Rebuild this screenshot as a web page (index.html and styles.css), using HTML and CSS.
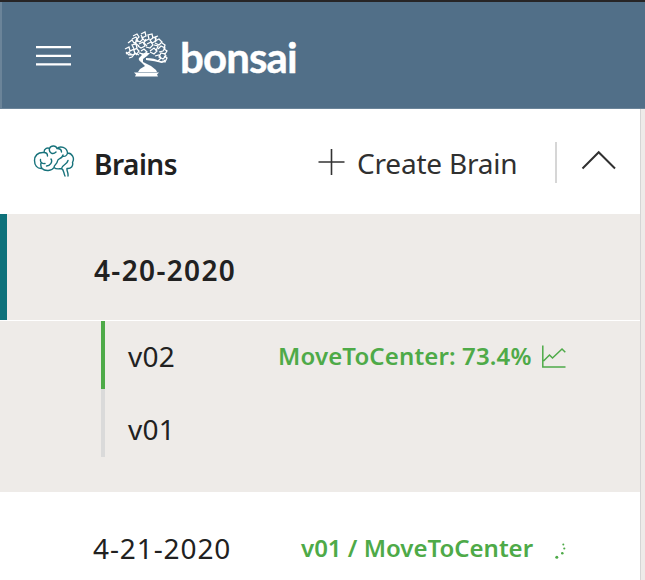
FILE: index.html
```html
<!DOCTYPE html>
<html lang="en">
<head>
<meta charset="utf-8">
<title>Bonsai</title>
<link rel="stylesheet" href="styles.css">
</head>
<body>
<header class="topbar">
  <svg class="menu" width="35" height="22" viewBox="0 0 35 22"><path d="M0 2.2h35M0 10.8h35M0 19.4h35"/></svg>
  <svg class="tree" width="46" height="46" viewBox="0 0 46 46">
    <g class="leaves">
      <path d="M1 18l4-2 1 4 4-2-2-4 4-1 1 4-3 2 1 4-4 1-2-3-3 2M4 12l4-3 2 3 4-2-2-4-4 2M9 5l4-2 2 3-3 3 4 2 3-3-2-4M17 3l4-2 1 4-4 2 3 3 4-2-1-4 4-1 1 4-3 2 2 3 4-2-1-4 3-1"/>
      <path d="M15 13l4-2 2 4-4 2-3-2M17 20l3-2 3 3-3 2-5-1M23 13l4-2 2 3-3 3-4-1M26 20l4-3 3 3-3 3-4-2M31 10l4-2 3 3-3 3-4-2M34 18l3-3 4 2-2 3-4 1M38 12l3 2-1 4 3 2-2 3-4-1-2 4 4 2 3-3-2-3M31 25l4-1 2 3-3 3 5 1 2-2M2 21l3 3 3-1M5 27l3-1 3-4 4 2M12 17l3 3-3 4"/>
      <path d="M28 6l4 1-1 4M22 8l-2 4 3 3M13 9l-2 3 4 3M30 14l4 1-2 5M40 25l3 2-2 4-3-1"/>
    </g>
    <path class="trunk" d="M15 21l4 2 3-1 4 0-3 3-4 3 0 3 8 4 5 4 1 2H14l2-3 5-3-4-4q-3-2-2-4l3-3zM22 27q9 0 13 3l4 1-1 1q-7-2-16-3z"/>
    <path class="pot" d="M10 41.5h25l-2 2 1 2H11l1-2z"/>
  </svg>
  <span class="wordmark">bonsai</span>
</header>
<div class="body">
  <main class="panel">
    <section class="heading">
      <svg class="brain" width="42" height="34" viewBox="0 0 42 34">
        <path d="M9 24.5C4 25 1.500 21 1.500 16.500S4.500 8 11 8.500C11 4 15 3.500 16.500 4.500C18 1 23 1.500 24 4.500C27 1.500 34 3 34.500 9C39 9 42 14 39.500 18.500C40.500 22 38 25 34 24.500C33.500 27 35.500 28 35 32M9 24.500C12 27.500 19 27 21 23.500C23 25.500 26 25 28.500 24.500C31 25.500 30.500 29 32 32M11 8.500C13 8.500 14.500 10 14.500 12M7.500 15.500C7 18.500 9.500 20 12 19.500M9 24.500C8 23 7.500 21 8 19M16.500 4.500C15.500 9 20 11 23 8M18 15C20 18 17 22 13.500 22M21 23.500C21 20 24 21 24.500 17C25 14 29 15.500 30 11M24 4.500C27 4.500 28.500 6 28.500 8M34.500 9C34 12 31.500 13 29.500 12M28.500 24.500C29 20.500 34 21 35 16.500"/>
      </svg>
      <h1 class="title">Brains</h1>
      <svg class="plus" width="27" height="27" viewBox="0 0 27 27"><path d="M.5 13h26M13.500 0v26"/></svg>
      <span class="create">Create Brain</span>
      <span class="divider"></span>
      <svg class="chevron" width="36" height="20" viewBox="0 0 36 20"><path d="M1.500 18.500L17.700 2.200 34 18.500"/></svg>
    </section>
    <section class="group"><span class="date strong">4-20-2020</span></section>
    <section class="versions">
      <div class="version active">
        <span class="label">v02</span>
        <span class="status score">MoveToCenter: 73.4%</span>
        <svg class="chart" width="24" height="24" viewBox="0 0 24 24"><path d="M.8.5v21.500h22.700M1.500 16l6-6 3 3L20 4l3.300 3.300"/></svg>
      </div>
      <div class="version"><span class="label">v01</span></div>
    </section>
    <section class="next">
      <span class="date">4-21-2020</span>
      <span class="status running">v01 / MoveToCenter</span>
      <svg class="spinner" width="12" height="16" viewBox="0 0 12 16"><circle cx="1.800" cy="14.200" r="1.500"/><circle cx="7.300" cy="10.300" r="1.300"/><circle cx="9.300" cy="5.500" r="1.100"/><circle cx="8.300" cy="1.400" r="1"/></svg>
    </section>
  </main>
</div>
</body>
</html>
```
FILE: styles.css
```css
* { box-sizing: border-box; }
body { margin: 0; width: 645px; height: 580px; overflow: hidden; background: #fff; color: #212121; font-family: "Noto Sans", "Open Sans", sans-serif; }
svg { display: block; flex: none; fill: none; }
span, h1 { white-space: nowrap; flex: none; }
.topbar { height: 109px; display: flex; align-items: flex-start; background: #516f88; border-top: 2px solid #272526; border-bottom: 1px solid #6b8499; box-shadow: inset 2px 0 #6b8499; padding-left: 36px; }
.menu { margin-top: 43px; stroke: #fff; stroke-width: 2.2; }
.tree { margin: 29px 0 0 53px; }
.leaves { stroke: #fff; stroke-width: 1.25; }
.trunk, .pot { fill: #fff; }
.wordmark { width: 130px; margin: 30px 0 0 10px; color: #fff; font: 700 42px/50px Lato, sans-serif; letter-spacing: -.9px; -webkit-text-stroke: .4px #fff; }
.body { height: 471px; background: #eeebe9; }
.panel { width: 641px; height: 471px; background: #fff; border-right: 1px solid #d5d5d5; }
.heading { height: 105px; display: flex; }
.brain { margin: 35px 0 0 33px; stroke: #17727b; stroke-width: 1.4; stroke-linecap: round; stroke-linejoin: round; }
.title { width: 223px; margin: 35px 0 0 19px; font-size: 28px; line-height: 40px; font-weight: 600; letter-spacing: -.5px; }
.plus { margin-top: 40px; margin-left: 1px; stroke: #333; stroke-width: 1.6; }
.create { width: 198px; margin: 34px 0 0 12px; font-size: 28px; line-height: 40px; color: #303030; letter-spacing: -.2px; }
.divider { width: 2px; height: 41px; margin-top: 33px; background: #d6d6d6; }
.chevron { margin: 41px 0 0 24px; stroke: #303030; stroke-width: 2; }
.group { position: relative; height: 107px; padding: 36px 0 0 94px; background: #eeebe8; border-bottom: 1px solid #fff; box-shadow: inset 7px 0 #0d717a; }
.date { font-size: 28px; line-height: 40px; letter-spacing: .9px; }
.strong { font-weight: 600; letter-spacing: 1.35px; }
.versions { height: 171px; padding-left: 101px; background: #eeebe8; }
.version { height: 68px; display: flex; border-left: 4px solid #dadada; padding-left: 23px; }
.version.active { border-color: #4eaa48; }
.label { width: 150px; font-size: 28px; line-height: 40px; margin-top: 15px; letter-spacing: .2px; }
.version:last-child .label { margin-top: 20px; }
.status { color: #4eaa48; font-size: 24px; font-weight: 600; line-height: 36px; }
.score { width: 264px; margin-top: 17px; letter-spacing: .13px; }
.chart { margin-top: 24px; stroke: #4eaa48; stroke-width: 1.5; }
.next { height: 88px; display: flex; padding: 36px 0 0 93px; }
.next .date { width: 208px; }
.running { width: 254px; margin-top: 2px; }
.spinner { margin-top: 15px; fill: #4eaa48; }
```
